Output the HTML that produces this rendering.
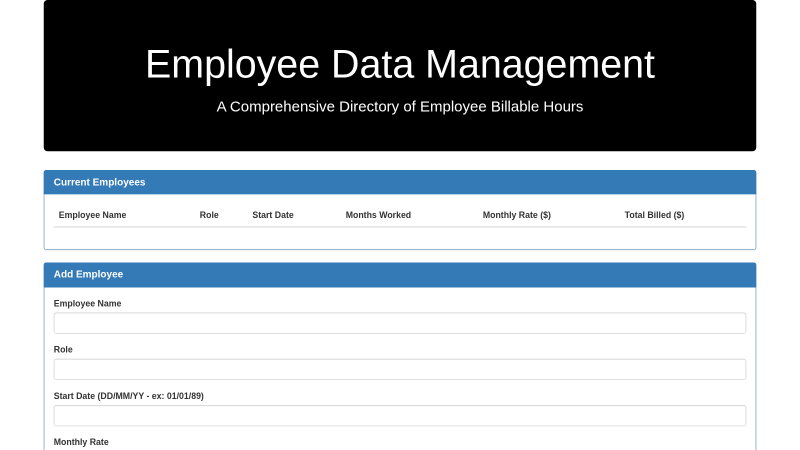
<!DOCTYPE html>
<html lang="en">
<head>
<meta charset="utf-8">
<title>Employee Data Management</title>
<style>
*{box-sizing:border-box}
html,body{margin:0;padding:0;width:800px;height:450px;overflow:hidden;background:#fff}
#page{position:absolute;left:0;top:0;width:1280px;height:720px;overflow:hidden;transform:scale(.625);transform-origin:0 0;filter:blur(.4px);font-family:"Liberation Sans",Arial,sans-serif;font-size:14px;line-height:1.42857143;color:#333;background:#fff}
.container{width:1170px;margin:0 auto;padding:0 15px}
.jumbotron{background:#000;color:#fff;border-radius:6px;padding:48px 60px;margin-bottom:30px;text-align:center;height:242px}
.jumbotron h1{font-size:63px;font-weight:500;line-height:1.1;margin:20px 0 10px;position:relative;top:.8px}
.jumbotron p{font-size:24px;font-weight:200;margin:16.4px 0 15px;line-height:34px}
.panel{background:#fff;border:1px solid #5f8db5;border-radius:4px;margin-bottom:20px;box-shadow:0 1px 1px rgba(0,0,0,.05)}
.panel-first{margin-bottom:20.4px}
.panel-heading{background:#337ab7;color:#fff;padding:11px 16px 10px;border-bottom:1px solid #337ab7;border-radius:4px 4px 0 0;margin:-1px -1px 0}
.panel-first .panel-heading{padding-top:10px}
.panel-title{font-size:16px;font-weight:700;line-height:1.1;margin:0}
.panel-first .panel-title{position:relative;top:1.6px}
.panel-body{padding:15px}
.panel-second .panel-body{padding-top:15.6px}
table{width:100%;max-width:100%;border-collapse:collapse;border-spacing:0;margin-bottom:20px}
th{text-align:left;padding:8px;line-height:1.42857143;border-bottom:2px solid #ddd;vertical-align:bottom}
label{display:inline-block;max-width:100%;margin-bottom:5px;font-weight:700}
.form-group{margin-bottom:15px}
.form-control{display:block;width:100%;height:34px;padding:6px 12px;font:14px "Liberation Sans",Arial,sans-serif;color:#555;background:#fff;border:1px solid #ccc;border-radius:4px;box-shadow:inset 0 1px 1px rgba(0,0,0,.075)}
</style>
</head>
<body>
<div id="page">
<div class="container">
  <div class="jumbotron">
    <h1>Employee Data Management</h1>
    <p>A Comprehensive Directory of Employee Billable Hours</p>
  </div>
  <div class="panel panel-first">
    <div class="panel-heading"><h3 class="panel-title">Current Employees</h3></div>
    <div class="panel-body">
      <table>
        <thead><tr><th>Employee Name</th><th>Role</th><th>Start Date</th><th>Months Worked</th><th>Monthly Rate ($)</th><th>Total Billed ($)</th></tr></thead>
        <tbody></tbody>
      </table>
    </div>
  </div>
  <div class="panel panel-second">
    <div class="panel-heading"><h3 class="panel-title">Add Employee</h3></div>
    <div class="panel-body">
      <div class="form-group"><label>Employee Name</label><input class="form-control" type="text"></div>
      <div class="form-group"><label>Role</label><input class="form-control" type="text"></div>
      <div class="form-group"><label>Start Date (DD/MM/YY - ex: 01/01/89)</label><input class="form-control" type="text"></div>
      <div class="form-group"><label>Monthly Rate</label><input class="form-control" type="text"></div>
    </div>
  </div>
</div>
</div>
</body>
</html>
